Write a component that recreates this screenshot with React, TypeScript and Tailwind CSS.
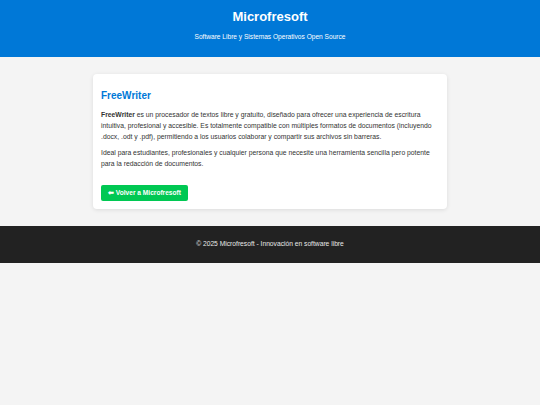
export default function App() {
  return (
    <div className="min-h-[405px] bg-[#f4f4f4] font-['Liberation_Sans',Arial,sans-serif] text-[#333]">
      <header className="bg-[#0078d7] h-[57px] flex flex-col items-center text-white">
        <h1 className="text-[13px] font-bold leading-[15px] mt-[8.5px]">Microfresoft</h1>
        <p className="text-[6.6px] leading-[8px] mt-[9px]">Software Libre y Sistemas Operativos Open Source</p>
      </header>
      <main className="pt-[17px] pb-[17px]">
        <div className="mx-auto w-[354px] bg-white rounded-[4px] shadow-[0_1px_4px_rgba(0,0,0,0.1)] px-[8px] pt-[16px] pb-[8px]">
          <h2 className="text-[#0078d7] text-[10px] font-bold leading-[11px] mb-[8px]">FreeWriter</h2>
          <p className="text-[6.8px] leading-[11px] mb-[4.5px]">
            <strong>FreeWriter</strong> es un procesador de textos libre y gratuito, diseñado para ofrecer una experiencia de escritura intuitiva, profesional y accesible. Es totalmente compatible con múltiples formatos de documentos (incluyendo .docx, .odt y .pdf), permitiendo a los usuarios colaborar y compartir sus archivos sin barreras.
          </p>
          <p className="text-[6.8px] leading-[11px]">
            Ideal para estudiantes, profesionales y cualquier persona que necesite una herramienta sencilla pero potente para la redacción de documentos.
          </p>
          <div className="mt-[16.5px] flex">
            <a className="flex items-center h-[16px] px-[7px] rounded-[2px] bg-[#00c853] text-white text-[6.6px] font-bold leading-none">
              ⬅ Volver a Microfresoft
            </a>
          </div>
        </div>
      </main>
      <footer className="bg-[#222] h-[37px] flex items-center justify-center text-[#e8e8e8] text-[6.7px]">
        © 2025 Microfresoft - Innovación en software libre
      </footer>
    </div>
  );
}
